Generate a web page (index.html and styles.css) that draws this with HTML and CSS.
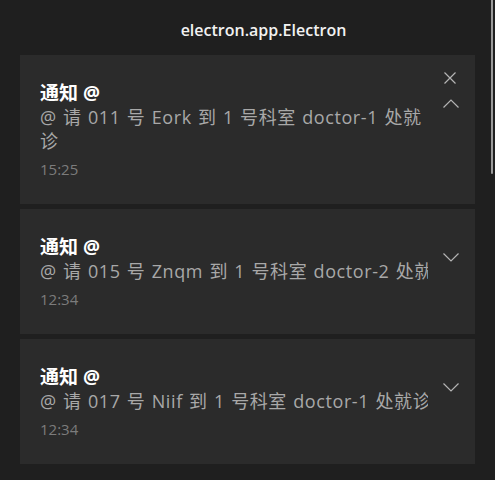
FILE: index.html
```html
<!DOCTYPE html>
<html lang="zh-CN">
<head>
<meta charset="utf-8">
<title>electron.app.Electron</title>
<link rel="stylesheet" href="styles.css">
</head>
<body>
<div class="panel">
  <header class="header">electron.app.Electron</header>
  <div class="list">
    <div class="card expanded">
      <div class="content">
        <div class="title">通知 @</div>
        <div class="body">@ 请 011 号 Eork 到 1 号科室 doctor-1 处就诊</div>
        <div class="time">15:25</div>
      </div>
      <div class="actions">
        <svg class="chev" width="16" height="9" viewBox="0 0 16 9"><path d="M0.5 8.5 L8 1 L15.5 8.5" fill="none" stroke="#b4b4b4" stroke-width="1.2"/></svg>
      </div>
      <svg class="close" width="12" height="12" viewBox="0 0 12 12"><path d="M0.5 0.5 L11.5 11.5 M11.5 0.5 L0.5 11.5" fill="none" stroke="#b4b4b4" stroke-width="1.2"/></svg>
    </div>
    <div class="card">
      <div class="content">
        <div class="title">通知 @</div>
        <div class="body">@ 请 015 号 Znqm 到 1 号科室 doctor-2 处就诊</div>
        <div class="time">12:34</div>
      </div>
      <div class="actions">
        <svg class="chev" width="16" height="9" viewBox="0 0 16 9"><path d="M0.5 0.5 L8 8 L15.5 0.5" fill="none" stroke="#b4b4b4" stroke-width="1.2"/></svg>
      </div>
    </div>
    <div class="card">
      <div class="content">
        <div class="title">通知 @</div>
        <div class="body">@ 请 017 号 Niif 到 1 号科室 doctor-1 处就诊</div>
        <div class="time">12:34</div>
      </div>
      <div class="actions">
        <svg class="chev" width="16" height="9" viewBox="0 0 16 9"><path d="M0.5 0.5 L8 8 L15.5 0.5" fill="none" stroke="#b4b4b4" stroke-width="1.2"/></svg>
      </div>
    </div>
  </div>
  <div class="scrollbar"></div>
</div>
</body>
</html>
```
FILE: styles.css
```css
html, body {
  margin: 0;
  padding: 0;
  background: #1f1f1f;
  height: 100%;
  overflow: hidden;
}
body {
  font-family: "Segoe UI", "Open Sans", "Noto Sans CJK SC", sans-serif;
  color: #fff;
}
.panel {
  position: relative;
  height: 480px;
}
.header {
  height: 55px;
  box-sizing: border-box;
  padding: 18px 0 0 32px;
  text-align: center;
  font-size: 16px;
  font-weight: 600;
  line-height: 24px;
  color: #f2f2f2;
}
.list {
  display: flex;
  flex-direction: column;
  gap: 5px;
  padding: 0 20px;
}
.card {
  position: relative;
  display: flex;
  background: #2b2b2b;
}
.content {
  flex: 1;
  min-width: 0;
  padding: 26px 0 25px 20px;
}
.title {
  font-size: 19px;
  font-weight: 700;
  line-height: 24px;
  color: #fff;
}
.body {
  font-size: 18px;
  line-height: 24px;
  letter-spacing: 0.6px;
  word-spacing: 1px;
  color: #a8a8a8;
  white-space: nowrap;
  overflow: hidden;
}
.expanded .body {
  white-space: normal;
}
.time {
  margin-top: 6px;
  font-size: 15px;
  line-height: 20px;
  color: #7c7c7c;
}
.actions {
  width: 47px;
  flex: none;
  display: flex;
  justify-content: center;
  padding-top: 44px;
  box-sizing: border-box;
}
.chev {
  display: block;
  margin-left: -2px;
}
.close {
  position: absolute;
  top: 17px;
  left: 424px;
}
.scrollbar {
  position: absolute;
  top: 0;
  right: 2px;
  width: 2px;
  height: 174px;
  border-radius: 0 0 1px 1px;
  background: #9a9a9a;
}
```
